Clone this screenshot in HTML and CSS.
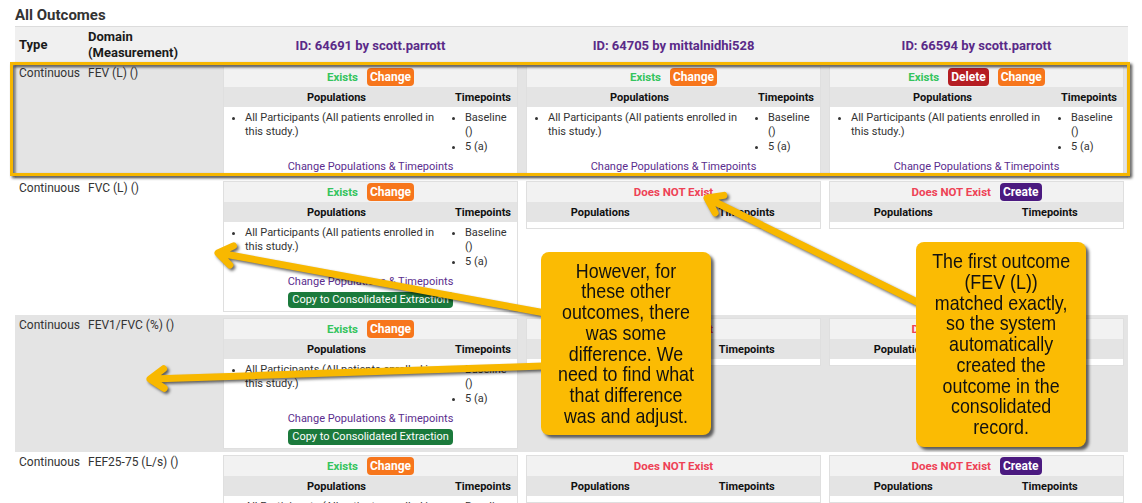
FILE: index.html
```html
<!DOCTYPE html>
<html lang="en">
<head>
<meta charset="utf-8">
<title>All Outcomes</title>
<link rel="stylesheet" href="styles.css">
</head>
<body>
<div class="page">
  <h2 class="title">All Outcomes</h2>
  <div class="outcomes">
    <div class="row head">
      <div class="col-type">Type</div>
      <div class="col-domain">Domain<br>(Measurement)</div>
      <div class="col-id">ID: 64691 by scott.parrott</div>
      <div class="col-id">ID: 64705 by mittalnidhi528</div>
      <div class="col-id">ID: 66594 by scott.parrott</div>
    </div>

    <div class="row shaded">
      <div class="col-type">Continuous</div>
      <div class="col-domain">FEV (L) ()</div>
      <div class="col-cell"><div class="box">
        <div class="box-head"><span class="exists">Exists</span><span class="btn orange">Change</span></div>
        <div class="box-sub"><span>Populations</span><span>Timepoints</span></div>
        <div class="box-body">
          <ul class="pops"><li>All Participants (All patients enrolled in this study.)</li></ul>
          <ul class="tps"><li>Baseline ()</li><li>5 (a)</li></ul>
          <div class="actions"><a class="link">Change Populations &amp; Timepoints</a></div>
        </div>
      </div></div>
      <div class="col-cell"><div class="box">
        <div class="box-head"><span class="exists">Exists</span><span class="btn orange">Change</span></div>
        <div class="box-sub"><span>Populations</span><span>Timepoints</span></div>
        <div class="box-body">
          <ul class="pops"><li>All Participants (All patients enrolled in this study.)</li></ul>
          <ul class="tps"><li>Baseline ()</li><li>5 (a)</li></ul>
          <div class="actions"><a class="link">Change Populations &amp; Timepoints</a></div>
        </div>
      </div></div>
      <div class="col-cell"><div class="box">
        <div class="box-head"><span class="exists">Exists</span><span class="btn red">Delete</span><span class="btn orange">Change</span></div>
        <div class="box-sub"><span>Populations</span><span>Timepoints</span></div>
        <div class="box-body">
          <ul class="pops"><li>All Participants (All patients enrolled in this study.)</li></ul>
          <ul class="tps"><li>Baseline ()</li><li>5 (a)</li></ul>
          <div class="actions"><a class="link">Change Populations &amp; Timepoints</a></div>
        </div>
      </div></div>
    </div>

    <div class="row">
      <div class="col-type">Continuous</div>
      <div class="col-domain">FVC (L) ()</div>
      <div class="col-cell"><div class="box">
        <div class="box-head"><span class="exists">Exists</span><span class="btn orange">Change</span></div>
        <div class="box-sub"><span>Populations</span><span>Timepoints</span></div>
        <div class="box-body">
          <ul class="pops"><li>All Participants (All patients enrolled in this study.)</li></ul>
          <ul class="tps"><li>Baseline ()</li><li>5 (a)</li></ul>
          <div class="actions"><a class="link">Change Populations &amp; Timepoints</a><span class="copy">Copy to Consolidated Extraction</span></div>
        </div>
      </div></div>
      <div class="col-cell"><div class="box empty">
        <div class="box-head"><span class="missing">Does NOT Exist</span></div>
        <div class="box-sub"><span>Populations</span><span>Timepoints</span></div>
        <div class="box-body"></div>
      </div></div>
      <div class="col-cell"><div class="box empty">
        <div class="box-head"><span class="missing">Does NOT Exist</span><span class="btn purple">Create</span></div>
        <div class="box-sub"><span>Populations</span><span>Timepoints</span></div>
        <div class="box-body"></div>
      </div></div>
    </div>

    <div class="row shaded">
      <div class="col-type">Continuous</div>
      <div class="col-domain">FEV1/FVC (%) ()</div>
      <div class="col-cell"><div class="box">
        <div class="box-head"><span class="exists">Exists</span><span class="btn orange">Change</span></div>
        <div class="box-sub"><span>Populations</span><span>Timepoints</span></div>
        <div class="box-body">
          <ul class="pops"><li>All Participants (All patients enrolled in this study.)</li></ul>
          <ul class="tps"><li>Baseline ()</li><li>5 (a)</li></ul>
          <div class="actions"><a class="link">Change Populations &amp; Timepoints</a><span class="copy">Copy to Consolidated Extraction</span></div>
        </div>
      </div></div>
      <div class="col-cell"><div class="box empty">
        <div class="box-head"><span class="missing">Does NOT Exist</span></div>
        <div class="box-sub"><span>Populations</span><span>Timepoints</span></div>
        <div class="box-body"></div>
      </div></div>
      <div class="col-cell"><div class="box empty">
        <div class="box-head"><span class="missing">Does NOT Exist</span><span class="btn purple">Create</span></div>
        <div class="box-sub"><span>Populations</span><span>Timepoints</span></div>
        <div class="box-body"></div>
      </div></div>
    </div>

    <div class="row">
      <div class="col-type">Continuous</div>
      <div class="col-domain">FEF25-75 (L/s) ()</div>
      <div class="col-cell"><div class="box">
        <div class="box-head"><span class="exists">Exists</span><span class="btn orange">Change</span></div>
        <div class="box-sub"><span>Populations</span><span>Timepoints</span></div>
        <div class="box-body">
          <ul class="pops"><li>All Participants (All patients enrolled in this study.)</li></ul>
          <ul class="tps"><li>Baseline ()</li><li>5 (a)</li></ul>
          <div class="actions"><a class="link">Change Populations &amp; Timepoints</a><span class="copy">Copy to Consolidated Extraction</span></div>
        </div>
      </div></div>
      <div class="col-cell"><div class="box empty">
        <div class="box-head"><span class="missing">Does NOT Exist</span></div>
        <div class="box-sub"><span>Populations</span><span>Timepoints</span></div>
        <div class="box-body"></div>
      </div></div>
      <div class="col-cell"><div class="box empty">
        <div class="box-head"><span class="missing">Does NOT Exist</span><span class="btn purple">Create</span></div>
        <div class="box-sub"><span>Populations</span><span>Timepoints</span></div>
        <div class="box-body"></div>
      </div></div>
    </div>
  </div>

  <div class="highlight"></div>

  <svg class="arrows" width="1142" height="503" viewBox="0 0 1142 503">
    <g fill="none" stroke="#f8b800" stroke-width="7" stroke-linecap="round" stroke-linejoin="round">
      <path d="M545 313 L219 253 M229.9 265.1 L218 253 L233.5 245.9"/>
      <path d="M543 366 L151 379 M164.2 388.3 L150 379 L163.6 368.8"/>
      <path d="M919 303 L708 198.5 M715.1 212.9 L707 198 L723.8 195.4"/>
    </g>
  </svg>

  <div class="callout callout-left"><span class="callout-text">However, for<br>these other<br>outcomes, there<br>was some<br>difference. We<br>need to find what<br>that difference<br>was and adjust.</span></div>
  <div class="callout callout-right"><span class="callout-text">The first outcome<br>(FEV (L))<br>matched exactly,<br>so the system<br>automatically<br>created the<br>outcome in the<br>consolidated<br>record.</span></div>
</div>
</body>
</html>
```

FILE: styles.css
```css
* { box-sizing: border-box; }
html, body {
  margin: 0;
  height: 503px;
  overflow: hidden;
  background: #fff;
}
body {
  font-family: Roboto, "Liberation Sans", sans-serif;
  color: #222;
}
.page {
  position: relative;
  width: 1142px;
  height: 503px;
  padding: 0 14px 0 15px;
}
.title {
  margin: 0;
  height: 26px;
  padding-top: 6px;
  font-size: 15px;
  line-height: 18px;
  font-weight: 700;
  color: #333;
}
.outcomes { width: 1113px; }
.row {
  display: grid;
  grid-template-columns: 69px 135px repeat(3, 1fr);
  background: #fff;
}
.row.shaded { background: #e4e4e4; }
.row.head {
  background: #f0f0f0;
  border-top: 1px solid #dcdcdc;
  height: 37px;
  align-items: center;
}
.row.head .col-type,
.row.head .col-domain {
  font-size: 13px;
  font-weight: 700;
  line-height: 16px;
  color: #1a1a1a;
  padding: 0 4px;
}
.col-id {
  text-align: center;
  font-size: 13px;
  font-weight: 700;
  color: #5a2a88;
}
.col-type, .col-domain {
  padding: 3px 4px;
  font-size: 12px;
  line-height: 14px;
  color: #333;
}
.col-cell { padding: 3px 4px; }
.box {
  border: 1px solid #dfdfdf;
  background: #fff;
}
.box-head {
  height: 20px;
  background: #f2f2f2;
  display: flex;
  justify-content: center;
  align-items: center;
  gap: 9px;
  font-size: 11.5px;
  font-weight: 700;
}
.exists { color: #35c45e; }
.missing { color: #ee4256; }
.btn {
  color: #fff;
  border-radius: 4px;
  padding: 0 3px;
  height: 18px;
  line-height: 18px;
  font-size: 12px;
  font-weight: 700;
}
.btn.orange { background: #f7761c; }
.btn.red { background: #b51d22; }
.btn.purple { background: #4b1a80; }
.box-sub {
  display: grid;
  grid-template-columns: 1fr 68px;
  height: 20px;
  align-items: center;
  text-align: center;
  background: #e4e4e4;
  font-size: 11px;
  font-weight: 700;
  color: #111;
}
.box.empty .box-sub { grid-template-columns: 1fr 1fr; }
.box-body {
  display: grid;
  grid-template-columns: 1fr 68px;
  padding: 4px 0 0;
  font-size: 11px;
  line-height: 14px;
  color: #333;
}
.box.empty .box-body { height: 6px; padding: 0; }
.box-body ul { margin: 0; }
.box-body li { margin-bottom: 1px; }
.pops { padding: 0 6px 0 21px; }
.tps { padding: 0 2px 0 16px; }
.actions {
  grid-column: 1 / -1;
  display: flex;
  flex-direction: column;
  align-items: center;
  margin-top: 5px;
}
.link { color: #5b2d8e; text-decoration: none; }
.copy {
  margin: 3px 0 3px;
  height: 16px;
  line-height: 16px;
  padding: 0 4px;
  border-radius: 4px;
  background: #1b7a3c;
  color: #fff;
  font-size: 11px;
}
.highlight {
  position: absolute;
  left: 10px;
  top: 62px;
  width: 1120px;
  height: 114px;
  border: 3px solid #f6b600;
  filter: drop-shadow(2px 2px 1.5px rgba(0, 0, 0, 0.75));
}
.arrows {
  position: absolute;
  left: 0;
  top: 0;
  pointer-events: none;
  filter: drop-shadow(2px 2px 1.5px rgba(0, 0, 0, 0.6));
}
.callout {
  position: absolute;
  display: flex;
  align-items: center;
  justify-content: center;
  text-align: center;
  background: #fbbb03;
  border-radius: 8px;
  box-shadow: 3px 3px 3px rgba(0, 0, 0, 0.6);
  color: #111;
}
.callout-text {
  display: inline-block;
  white-space: nowrap;
  font-family: "Liberation Sans", Arial, sans-serif;
  font-size: 21px;
  line-height: 20.7px;
  transform: scaleX(0.85);
}
.callout-left { left: 541px; top: 252px; width: 170px; height: 183px; }
.callout-right { left: 916px; top: 242px; width: 170px; height: 205px; }
```
